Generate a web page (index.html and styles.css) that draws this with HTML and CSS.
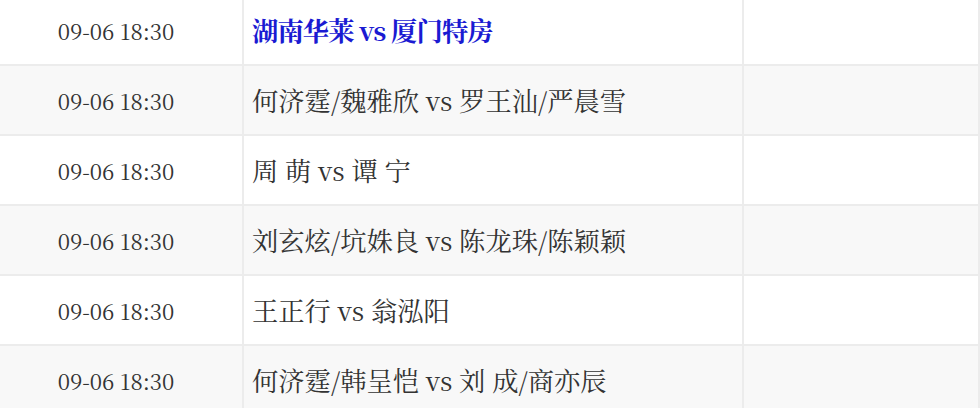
FILE: index.html
```html
<!DOCTYPE html>
<html lang="zh-CN">
<head>
<meta charset="utf-8">
<link rel="stylesheet" href="styles.css">
</head>
<body>
<table class="schedule">
  <tbody>
    <tr>
      <td class="time">09-06 18:30</td>
      <td class="match"><a class="match-link">湖南华莱 vs 厦门特房</a></td>
      <td class="extra"></td>
    </tr>
    <tr>
      <td class="time">09-06 18:30</td>
      <td class="match">何济霆/魏雅欣 vs 罗王汕/严晨雪</td>
      <td class="extra"></td>
    </tr>
    <tr>
      <td class="time">09-06 18:30</td>
      <td class="match">周 萌 vs 谭 宁</td>
      <td class="extra"></td>
    </tr>
    <tr>
      <td class="time">09-06 18:30</td>
      <td class="match">刘玄炫/坑姝良 vs 陈龙珠/陈颖颖</td>
      <td class="extra"></td>
    </tr>
    <tr>
      <td class="time">09-06 18:30</td>
      <td class="match">王正行 vs 翁泓阳</td>
      <td class="extra"></td>
    </tr>
    <tr>
      <td class="time">09-06 18:30</td>
      <td class="match">何济霆/韩呈恺 vs 刘 成/商亦辰</td>
      <td class="extra"></td>
    </tr>
  </tbody>
</table>
</body>
</html>
```

FILE: styles.css
```css
html, body {
  margin: 0;
  padding: 0;
  background: #fff;
  overflow: hidden;
}
body {
  font-family: "Noto Serif CJK SC", "Liberation Serif", "Noto Sans CJK SC", serif;
  color: #333;
}
.schedule {
  border-collapse: collapse;
  width: 989px;
  margin: -6px 0 0 -9px;
  table-layout: fixed;
}
.schedule td {
  border: 2px solid #ececec;
  height: 70px;
  padding: 0 8px;
  box-sizing: border-box;
  vertical-align: middle;
  font-size: 22px;
}
.schedule tr:nth-child(even) td {
  background: #f8f8f8;
}
.schedule .time {
  width: 251px;
  padding: 0 13px 0 10px;
  text-align: center;
}
.schedule .match {
  width: 500px;
  font-size: 26.3px;
}
.match-link {
  color: #1a1ad2;
  font-weight: bold;
  letter-spacing: -0.9px;
  text-decoration: none;
}
```
